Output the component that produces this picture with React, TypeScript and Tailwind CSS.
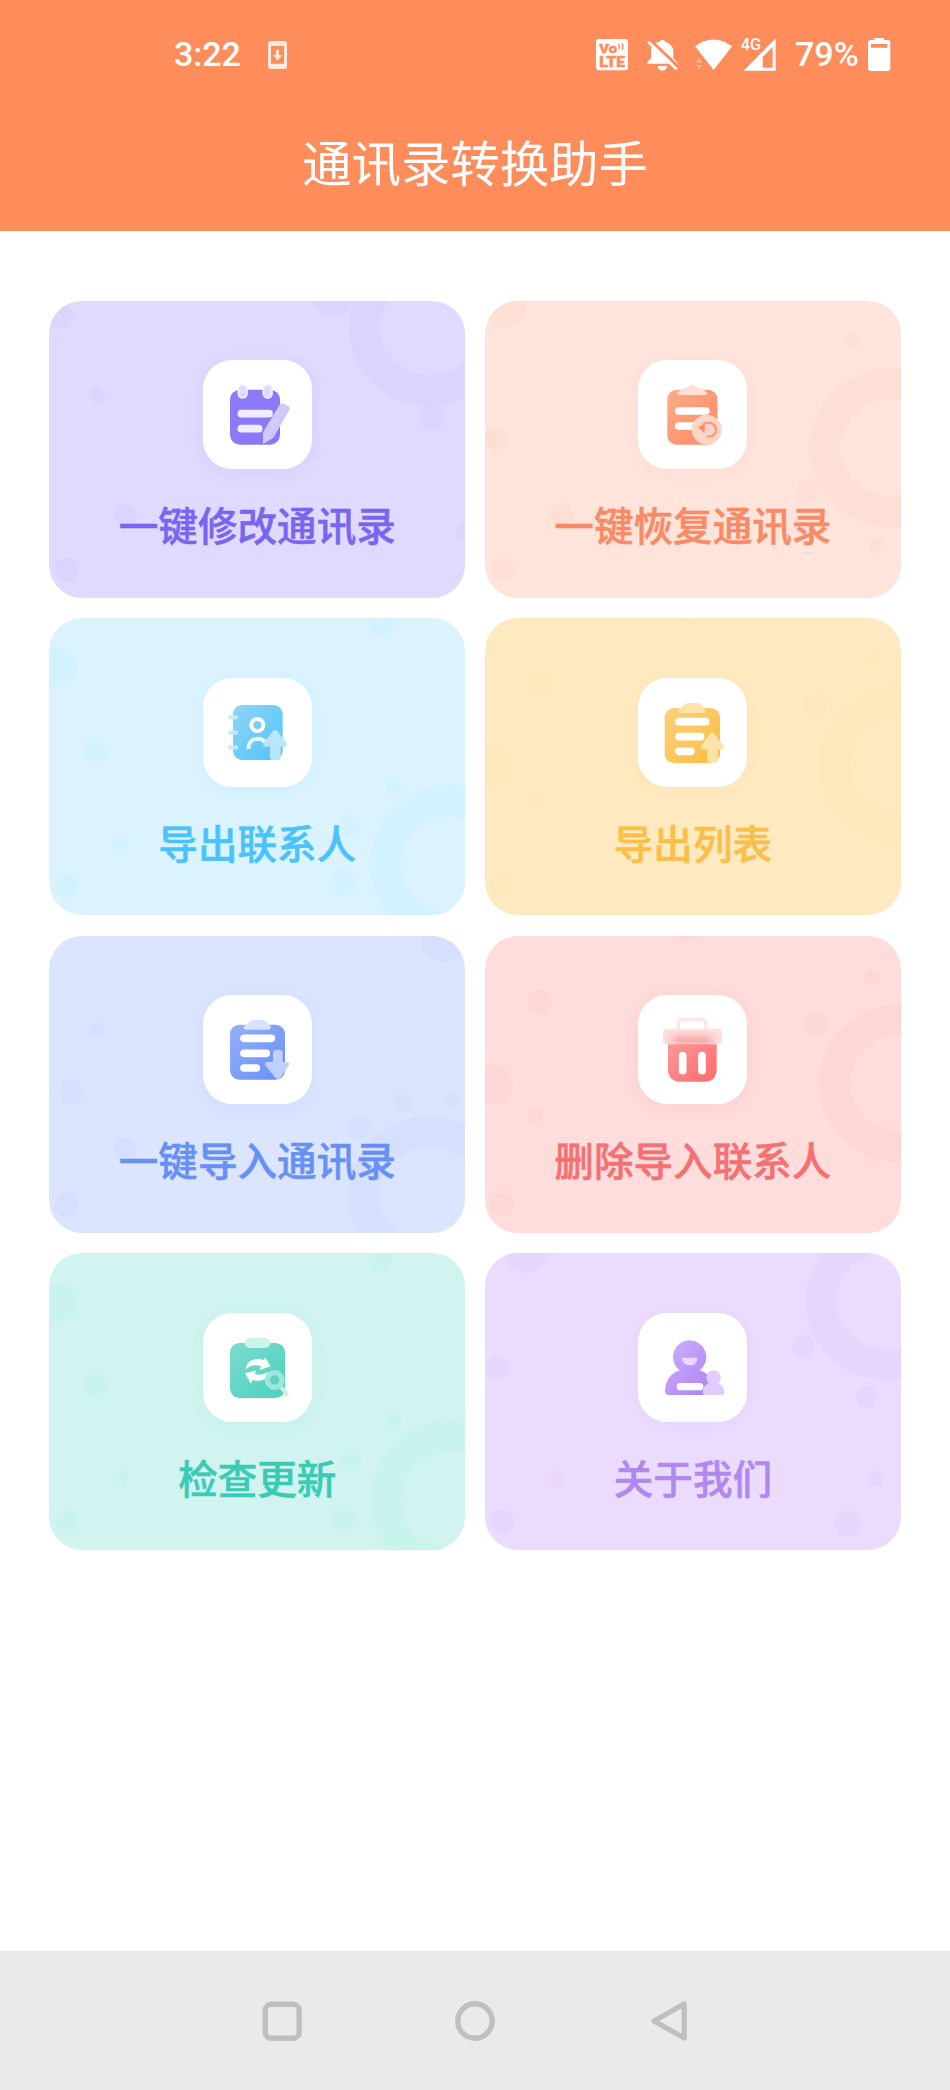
import type { ReactNode } from "react";

type Blob = [cx: number, cy: number, r: number];

interface CardSpec {
  label: string;
  card: string;
  text: string;
  blob: string;
  shadow: string;
  from: string;
  to: string;
  x: number;
  y: number;
  ring: [number, number];
  blobs: Blob[];
  icon: (fill: string) => ReactNode;
}

const Lines = ({ rows }: { rows: [number, number, number][] }) => (
  <g stroke="#fff" strokeWidth="23" strokeLinecap="round">
    {rows.map(([x1, x2, y]) => (
      <path key={y} d={`M${x1} ${y}H${x2}`} />
    ))}
  </g>
);

const cards: CardSpec[] = [
  {
    label: "一键修改通讯录",
    card: "bg-[#dfdaff]",
    text: "text-[#7965f0]",
    blob: "#dad4fe",
    shadow: "shadow-[0_3px_14px_3px_rgba(121,101,240,0.06)]",
    from: "#8c7cf3",
    to: "#8a76ff",
    x: 28,
    y: 32,
    ring: [1172, 110],
    blobs: [[65, 78, 36], [880, 8, 67], [171, 315, 24], [1176, 383, 36], [256, 675, 35], [80, 838, 36], [1281, 725, 30]],
    icon: (f) => (
      <>
        <rect x="568" y="300" width="150" height="165" rx="30" fill={f} />
        <g fill="#dfdaff" stroke="#f1eeff" strokeWidth="5">
          <rect x="593" y="286" width="26" height="39" rx="13" />
          <rect x="668" y="286" width="26" height="39" rx="13" />
        </g>
        <g stroke="#f1edff" strokeWidth="23" strokeLinecap="round">
          <path d="M602 372H685M602 417H654" />
        </g>
        <path d="M667 463V428L717 345Q723 339 731 343L743 349Q750 354 746 362L698 444Z" fill="#d3cafc" />
        <path d="M667 430L690 444M690 444L743 354" stroke="#c8bdfb" strokeWidth="3" fill="none" />
      </>
    ),
  },
  {
    label: "一键恢复通讯录",
    card: "bg-[#fee4db]",
    text: "text-[#f98a66]",
    blob: "#fedfd5",
    shadow: "shadow-[0_3px_14px_3px_rgba(249,138,102,0.06)]",
    from: "#fcac89",
    to: "#fb8962",
    x: 30,
    y: 32,
    ring: [1247, 472],
    blobs: [[90, 50, 60], [1133, 150, 24], [64, 445, 35], [1000, 604, 35], [260, 675, 34], [84, 837, 35], [1205, 763, 20]],
    icon: (f) => (
      <>
        <rect x="577" y="300" width="150" height="165" rx="28" fill={f} />
        <path d="M608 306L644 288Q651 284 659 288L695 306Q700 316 688 316H615Q604 316 608 306Z" fill="#ffe0d5" />
        <Lines rows={[[611, 693, 364], [611, 660, 409]]} />
        <circle cx="695" cy="420" r="45" fill="#fed4c5" />
        <path d="M680 412Q686 399 702 399A21 21 0 0 1 702 441H696" stroke="#f89c7c" strokeWidth="7" fill="none" />
        <path d="M668 411L690 408L688 430Z" fill="#f58c69" />
      </>
    ),
  },
  {
    label: "导出联系人",
    card: "bg-[#dbf3ff]",
    text: "text-[#4ac3fc]",
    blob: "#d3f2ff",
    shadow: "shadow-[0_3px_14px_3px_rgba(60,185,250,0.06)]",
    from: "#8fd4f8",
    to: "#51c3fb",
    x: 28,
    y: 31,
    ring: [1235, 770],
    blobs: [[53, 180, 60], [1025, 48, 36], [168, 428, 36], [1060, 535, 24], [930, 654, 33], [243, 706, 24], [80, 836, 35], [909, 824, 39]],
    icon: (f) => (
      <>
        <rect x="577" y="291" width="149" height="165" rx="27" fill={f} />
        <g stroke="#c2e9fc" strokeWidth="13" strokeLinecap="round">
          <path d="M569 328H586M569 374H586M569 418H586" />
        </g>
        <circle cx="650" cy="351" r="18" fill="none" stroke="#fff" strokeWidth="12" />
        <path d="M623 423Q624 393 650 392Q672 392 681 413" fill="none" stroke="#e6f7ff" strokeWidth="12" />
        <path d="M697 369Q703 363 710 369L738 405Q742 415 732 416H720V446Q720 456 710 456H698Q688 456 688 446V416H674Q665 414 669 404Z" fill="#b7e6fe" />
      </>
    ),
  },
  {
    label: "导出列表",
    card: "bg-[#fee9c0]",
    text: "text-[#fbbf47]",
    blob: "#fee7ba",
    shadow: "shadow-[0_3px_14px_3px_rgba(251,191,71,0.04)]",
    from: "#fad17f",
    to: "#fdbd3e",
    x: 30,
    y: 31,
    ring: [1276, 472],
    blobs: [[640, 15, 34], [194, 226, 36], [1192, 156, 24], [1022, 290, 35], [52, 475, 60], [179, 571, 24], [82, 836, 35]],
    icon: (f) => (
      <>
        <rect x="569" y="300" width="166" height="165" rx="28" fill={f} />
        <path d="M609 306Q618 298 622 294Q631 285 642 285H663Q675 285 681 294Q686 300 691 306Q693 315 682 315H619Q608 314 609 306Z" fill="#fee3ac" />
        <Lines rows={[[612, 692, 341], [612, 677, 386], [612, 648, 430]]} />
        <path d="M705 378Q712 371 719 378L746 414Q749 424 740 425H729V454Q729 465 718 465H707Q697 465 697 454V425H683Q674 424 678 414Z" fill="#fee2ac" />
      </>
    ),
  },
  {
    label: "一键导入通讯录",
    card: "bg-[#dbe5ff]",
    text: "text-[#6690f5]",
    blob: "#d4e0fe",
    shadow: "shadow-[0_3px_14px_3px_rgba(90,130,245,0.06)]",
    from: "#95b1fa",
    to: "#678efa",
    x: 28,
    y: 30,
    ring: [1170, 808],
    blobs: [[1212, 42, 67], [171, 311, 24], [95, 499, 36], [1087, 531, 27], [1236, 520, 24], [958, 604, 35], [256, 672, 35], [80, 835, 36]],
    icon: (f) => (
      <>
        <rect x="568" y="298" width="165" height="165" rx="28" fill={f} />
        <path d="M609 304Q617 297 622 292Q631 283 642 283H662Q674 283 680 292Q686 299 690 304Q692 313 681 313H618Q607 312 609 304Z" fill="#d7e2fe" />
        <Lines rows={[[610, 692, 339], [610, 677, 384], [610, 647, 428]]} />
        <path d="M697 384Q697 373 707 373H715Q726 373 726 384V410H739Q748 412 744 421L719 457Q711 465 704 457L675 421Q670 411 680 410H697Z" fill="#c0d0fc" />
      </>
    ),
  },
  {
    label: "删除导入联系人",
    card: "bg-[#fedddc]",
    text: "text-[#f57072]",
    blob: "#fdd7d7",
    shadow: "shadow-[0_3px_14px_3px_rgba(250,100,105,0.09)]",
    from: "#f99b9b",
    to: "#ff696e",
    x: 30,
    y: 30,
    ring: [1276, 472],
    blobs: [[633, 13, 34], [194, 226, 36], [1191, 156, 24], [1024, 292, 35], [52, 475, 60], [180, 569, 24], [82, 836, 35]],
    icon: (f) => (
      <>
        <defs>
          <linearGradient id="lid" x1="0" y1="0" x2="0" y2="1">
            <stop offset="0" stopColor="#ffe6e6" />
            <stop offset="0.4" stopColor="#fdc8c8" />
            <stop offset="0.78" stopColor="#faa9a9" />
            <stop offset="1" stopColor="#fcc8c8" />
          </linearGradient>
          <linearGradient id="lidSide" x1="0" x2="1">
            <stop offset="0" stopColor="#fee0e0" />
            <stop offset="0.1" stopColor="#fedede" stopOpacity="0.8" />
            <stop offset="0.28" stopColor="#fedede" stopOpacity="0" />
            <stop offset="0.72" stopColor="#fedede" stopOpacity="0" />
            <stop offset="0.9" stopColor="#fedede" stopOpacity="0.8" />
            <stop offset="1" stopColor="#fee0e0" />
          </linearGradient>
        </defs>
        <path d="M579 345H725V430Q725 469 686 469H618Q579 469 579 430Z" fill={f} />
        <path d="M610 314V296Q610 282 624 282H678Q692 282 692 296V314" fill="none" stroke="#fee6e6" strokeWidth="10" />
        <rect x="564" y="310" width="176" height="47" rx="14" fill="url(#lid)" />
        <rect x="564" y="310" width="176" height="47" rx="14" fill="url(#lidSide)" />
        <path d="M623 391V436M681 391V436" stroke="#fff" strokeWidth="23" strokeLinecap="round" />
      </>
    ),
  },
  {
    label: "检查更新",
    card: "bg-[#d1f4f0]",
    text: "text-[#3bcbb5]",
    blob: "#c9f4ee",
    shadow: "shadow-[0_3px_14px_3px_rgba(50,200,180,0.06)]",
    from: "#7ddace",
    to: "#4bd2bd",
    x: 28,
    y: 28,
    ring: [1235, 768],
    blobs: [[53, 178, 60], [1023, 45, 36], [168, 425, 36], [1060, 533, 24], [932, 652, 32], [243, 704, 24], [80, 834, 36], [909, 823, 39]],
    icon: (f) => (
      <>
        <rect x="568" y="297" width="165" height="165" rx="28" fill={f} />
        <rect x="612" y="282" width="77" height="30" rx="15" fill="#cef2ec" />
        <path d="M615 377Q618 351 642 346Q657 343 670 348L673 340L690 367L657 378L661 367Q633 358 615 377Z" fill="#fff" />
        <path d="M613 388L647 379L642 390Q664 396 682 384V400Q661 415 635 408L631 419Z" fill="#fff" />
        <path d="M722 430L741 454" stroke="#c5efe9" strokeWidth="12" />
        <circle cx="702" cy="408" r="22" fill="#61d0c1" stroke="#9ee5da" strokeWidth="16" />
      </>
    ),
  },
  {
    label: "关于我们",
    card: "bg-[#ebdcff]",
    text: "text-[#b088f0]",
    blob: "#e4d6fd",
    shadow: "shadow-[0_3px_14px_3px_rgba(165,110,245,0.05)]",
    from: "#cfb0fc",
    to: "#aa80f3",
    x: 30,
    y: 28,
    ring: [1235, 171],
    blobs: [[152, 20, 67], [67, 373, 35], [985, 307, 34], [1174, 459, 32], [1205, 705, 23], [82, 834, 36], [1118, 838, 39]],
    icon: (f) => (
      <>
        <path
          d="M644 289A50 50 0 0 1 674 379Q719 394 719 440Q719 453 706 453H582Q570 453 570 441Q573 392 614 379A50 50 0 0 1 644 289Z"
          fill={f}
        />
        <path d="M620 341H668Q664 364 644 364Q624 364 620 341Z" fill="#ead9ff" />
        <rect x="605" y="417" width="80" height="22" rx="11" fill="#fff" />
        <path d="M715 379A22 22 0 0 1 730 417Q748 427 748 444Q748 453 739 453H692Q683 453 683 444Q683 427 701 417A22 22 0 0 1 715 379Z" fill="#e0ccfe" />
      </>
    ),
  },
];

function FeatureCard({ spec, index }: { spec: CardSpec; index: number }) {
  const { x, y } = spec;
  const gradient = `tint-${index}`;
  return (
    <button
      className={`relative flex h-[297px] w-full flex-col items-center overflow-hidden rounded-[33px] pt-[59.5px] ${spec.card}`}
    >
      <svg className="absolute inset-0 h-full w-full" viewBox={`${x} ${y} 1248 891`} preserveAspectRatio="none">
        <ellipse cx={spec.ring[0]} cy={spec.ring[1]} rx="197" ry="191" fill="none" stroke={spec.blob} strokeWidth="92" />
        {spec.blobs.map(([cx, cy, r]) => (
          <circle key={`${cx}-${cy}`} cx={cx} cy={cy} r={r} fill={spec.blob} />
        ))}
        {index === 7 && <circle cx="246" cy="706" r="24" fill="#ecd7fc" />}
      </svg>
      <span className={`relative size-[109px] shrink-0 rounded-[29px] bg-white ${spec.shadow}`}>
        <svg className="size-full" viewBox={`${x + 459} ${y + 179} 327 327`}>
          <defs>
            <linearGradient id={gradient} x1="0" y1="0" x2="1" y2="1">
              <stop offset="0" stopColor={spec.from} />
              <stop offset="1" stopColor={spec.to} />
            </linearGradient>
          </defs>
          {spec.icon(`url(#${gradient})`)}
        </svg>
      </span>
      <span
        className={`relative mt-[35px] text-[39.6px] leading-[40px] font-medium whitespace-nowrap [-webkit-text-stroke:0.5px_currentColor] ${spec.text}`}
      >
        {spec.label}
      </span>
    </button>
  );
}

function StatusBar() {
  return (
    <div className="flex h-[108px] items-center pl-[174px] font-['Roboto',sans-serif] text-[34px] font-medium">
      <span className="w-[94px] leading-none">3:22</span>
      <svg className="h-[36px] w-[19px] opacity-80" viewBox="354 48 57 108">
        <path
          fillRule="evenodd"
          fill="#fff"
          d="M362 63H403Q411 63 411 71V139Q411 147 403 147H362Q354 147 354 139V71Q354 63 362 63ZM363 78V131H402V78Z"
        />
        <path d="M378 89H387V105H396L382.500 122L369 105H378Z" fill="#fff" />
      </svg>
      <svg className="ml-[309px] h-[36px] w-[32px]" viewBox="78 48 96 108">
        <rect x="78" y="57" width="96" height="94" rx="9" fill="#fff" />
        <g fill="#ff8c5b" stroke="#ff8c5b" strokeWidth="1.5" fontFamily="Roboto, sans-serif" fontWeight="900">
          <text x="88" y="99" fontSize="41" textLength="53" lengthAdjust="spacingAndGlyphs">Vo</text>
          <text x="88" y="141" fontSize="42" textLength="77" lengthAdjust="spacingAndGlyphs">LTE</text>
        </g>
        <path d="M145 73Q151 79 146 88M155 70Q162 78 156 90" stroke="#ff8c5b" strokeWidth="4" fill="none" />
      </svg>
      <svg className="ml-[18px] h-[36px] w-[32px]" viewBox="228 48 96 108">
        <path
          d="M232 131V126L243 115V91Q243 69 269 65Q270 59 277 59Q284 59 285 65Q310 71 310 97V115L322 127V131Z"
          fill="#fff"
        />
        <path d="M263 138H291Q290 152 277 152Q264 152 263 138Z" fill="#fff" />
        <path d="M241 60L328 143" stroke="#ff8c5b" strokeWidth="9" />
        <path d="M235 66L320 148" stroke="#fff" strokeWidth="8" />
      </svg>
      <svg className="ml-[17px] h-[36px] w-[37px]" viewBox="375 48 111 108">
        <path d="M375 79Q430 38 486 79L431 150Z" fill="#fff" />
        <path d="M378 128L387 115L397 128ZM378 135H397L387 148Z" fill="#fff" opacity="0.4" />
      </svg>
      <svg className="ml-[9px] h-[36px] w-[36px]" viewBox="513 48 108 108">
        <path fillRule="evenodd" fill="#fff" d="M617 55V152H521ZM608 81L578 111V143H608Z" />
        <path d="M511 50H565L578 63V86L561 103H511Z" fill="#ff8c5b" />
        <text x="512" y="90" fill="#fff" fontFamily="Roboto, sans-serif" fontWeight="500" fontSize="48" textLength="61" lengthAdjust="spacingAndGlyphs">
          4G
        </text>
      </svg>
      <span className="ml-[18px] w-[66px] leading-none whitespace-nowrap">79%</span>
      <svg className="ml-[7px] h-[36px] w-[23px]" viewBox="894 48 69 108">
        <path
          fillRule="evenodd"
          fill="#fff"
          d="M913 54H942V60H953Q961 60 961 68V145Q961 153 953 153H902Q894 153 894 145V68Q894 60 902 60H913ZM903 72V83H952V72Z"
        />
      </svg>
    </div>
  );
}

export default function App() {
  return (
    <div className="flex h-[2090px] w-[950px] flex-col bg-white font-['Noto_Sans_CJK_SC',sans-serif]">
      <header className="h-[231px] shrink-0 bg-[#ff8c5b] text-white">
        <StatusBar />
        <h1 className="mt-[26px] text-center text-[49.4px] leading-[54px] font-normal">通讯录转换助手</h1>
      </header>
      <main className="grid flex-1 content-start grid-cols-[416px_416px] gap-x-[19.6px] gap-y-[20.5px] pt-[69.6px] pl-[49.3px]">
        {cards.map((spec, i) => (
          <FeatureCard key={spec.label} spec={spec} index={i} />
        ))}
      </main>
      <nav className="flex h-[139px] shrink-0 items-center bg-[#eaeaea] pl-[262px]">
        <svg className="size-[40px]" viewBox="0 0 40 40" fill="none" stroke="#bfbfbf" strokeWidth="5.4">
          <rect x="3.2" y="3.2" width="34" height="34" rx="6" />
        </svg>
        <svg className="ml-[153px] size-[40px]" viewBox="0 0 40 40" fill="none" stroke="#bfbfbf" strokeWidth="5.4">
          <circle cx="20" cy="20" r="17.2" />
        </svg>
        <svg className="ml-[155px] h-[42px] w-[38px]" viewBox="0 0 38 42" fill="none" stroke="#bfbfbf" strokeWidth="5.2" strokeLinejoin="round">
          <path d="M34.2 4V38L4 21Z" />
        </svg>
      </nav>
    </div>
  );
}
